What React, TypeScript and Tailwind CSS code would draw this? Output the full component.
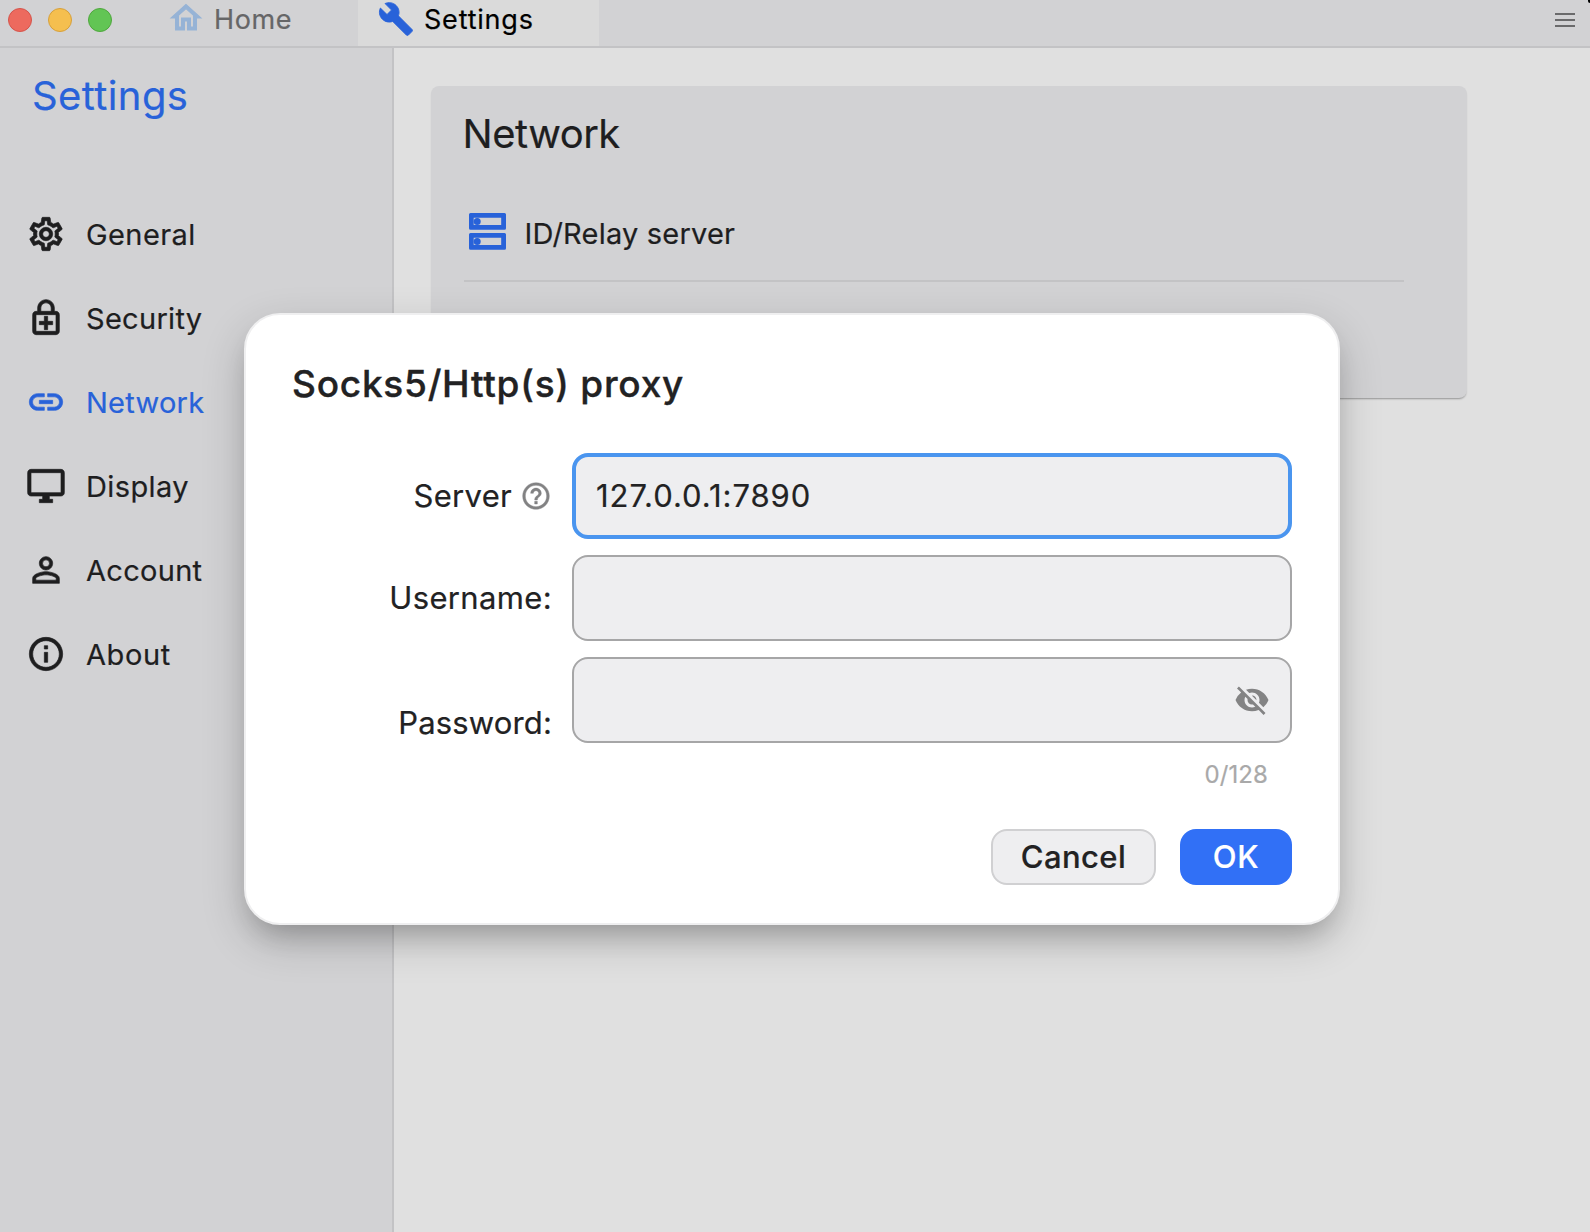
import type { ReactNode } from "react";
import {
  MdBuild,
  MdHelpOutline,
  MdInfoOutline,
  MdLink,
  MdOutlineDesktopWindows,
  MdOutlineEnhancedEncryption,
  MdOutlineHome,
  MdOutlineSettings,
  MdPersonOutline,
  MdVisibilityOff,
} from "react-icons/md";

const navItems = [
  { label: "General", Icon: MdOutlineSettings, tracking: "tracking-[0.4px]" },
  { label: "Security", Icon: MdOutlineEnhancedEncryption, tracking: "tracking-[0.3px]" },
  { label: "Network", Icon: MdLink, tracking: "tracking-[0.25px]", active: true },
  { label: "Display", Icon: MdOutlineDesktopWindows, tracking: "tracking-[0.4px]" },
  { label: "Account", Icon: MdPersonOutline, tracking: "tracking-[0.3px]" },
  { label: "About", Icon: MdInfoOutline, tracking: "tracking-[0.6px]" },
];

function ServerIcon() {
  return (
    <svg width="37" height="37" viewBox="0 0 37 37" className="shrink-0 text-[#2862d9]" fill="currentColor">
      <path
        fillRule="evenodd"
        d="M1.5 0h34A1.5 1.5 0 0 1 37 1.5v13.8a1.5 1.5 0 0 1-1.5 1.5h-34A1.5 1.5 0 0 1 0 15.3V1.5A1.5 1.5 0 0 1 1.5 0ZM4.7 4.7v7.4h27.5V4.7Z"
      />
      <circle cx="8.2" cy="8.4" r="3.5" />
      <path
        fillRule="evenodd"
        d="M1.5 20h34a1.5 1.5 0 0 1 1.5 1.5v13.8a1.5 1.5 0 0 1-1.5 1.5h-34A1.5 1.5 0 0 1 0 35.3V21.5A1.5 1.5 0 0 1 1.5 20ZM4.7 24.7v7.4h27.5v-7.4Z"
      />
      <circle cx="8.2" cy="28.4" r="3.5" />
    </svg>
  );
}

function TitleBar() {
  return (
    <header className="flex h-12 shrink-0 border-b-2 border-[#c3c3c5] bg-[#d2d2d4]">
      <div className="flex w-[358px] items-start pl-2 pt-2">
        <div className="flex gap-4">
          <span className="size-6 rounded-full border border-[#d5544b] bg-[#ed6a5e]" />
          <span className="size-6 rounded-full border border-[#d6a03c] bg-[#f5bf4f]" />
          <span className="size-6 rounded-full border border-[#4fa73d] bg-[#62c554]" />
        </div>
        <div className="-mt-2 ml-14 flex h-[38px] items-center">
          <MdOutlineHome className="mb-0.5 size-9 stroke-[0.7] text-[#96b3d6] [&_[fill=none]]:stroke-none" />
          <span className="ml-2.5 text-[27px] leading-none tracking-[0.6px] text-[#666667]">Home</span>
        </div>
      </div>
      <div className="flex h-[46px] w-[241px] bg-[#dadada] pl-[20px]">
        <div className="flex h-[38px] items-center">
          <MdBuild className="size-9 stroke-[0.6] text-[#2862d9] [&_[fill=none]]:stroke-none" />
          <span className="ml-2.5 text-[27px] leading-none tracking-[0.8px] text-black">Settings</span>
        </div>
      </div>
      <div className="ml-auto mr-[15px] mt-[13px] flex flex-col gap-1">
        <span className="h-0.5 w-5 bg-[#6a6a6b]" />
        <span className="h-0.5 w-5 bg-[#6a6a6b]" />
        <span className="h-0.5 w-5 bg-[#6a6a6b]" />
      </div>
    </header>
  );
}

function Sidebar() {
  return (
    <aside className="w-[394px] shrink-0 border-r-2 border-[#c3c3c5] bg-[#d2d2d4]">
      <h1 className="ml-8 mt-[24px] text-[40px] leading-[48px] tracking-[0.4px] text-[#2862d9]">Settings</h1>
      <nav className="mt-[72px]">
        {navItems.map(({ label, Icon, tracking, active }) => (
          <div
            key={label}
            className={`flex h-[84px] items-center pl-[26px] ${active ? "text-[#2862d9]" : "text-[#1e1e1f]"}`}
          >
            <Icon className="size-10 stroke-[0.4] [&_[fill=none]]:stroke-none" />
            <span className={`ml-5 text-[29px] leading-none ${tracking}`}>{label}</span>
          </div>
        ))}
      </nav>
    </aside>
  );
}

function Field({ label, children, labelClass = "" }: { label: ReactNode; children: ReactNode; labelClass?: string }) {
  return (
    <div className="flex">
      <div className={`flex h-[84px] w-[260px] items-center justify-end text-[31px] leading-none ${labelClass}`}>
        {label}
      </div>
      <div className="ml-5 w-[720px]">{children}</div>
    </div>
  );
}

function ProxyDialog() {
  return (
    <div
      role="dialog"
      className="absolute left-[244px] top-[313px] flex h-[612px] w-[1096px] flex-col rounded-[36px] border-2 border-[#efeff0] bg-white px-[46px] text-[#222223] shadow-[0_18px_28px_-12px_rgba(0,0,0,0.2),0_16px_44px_rgba(0,0,0,0.2)]"
    >
      <h2 className="mt-[45px] text-[37px] font-medium leading-[48px] tracking-[0.76px] [-webkit-text-stroke:0.35px]">
        Socks5/Http(s) proxy
      </h2>
      <div className="mt-[45px] flex flex-col gap-4">
        <Field
          label={
            <>
              <span className="tracking-[0.3px]">Server</span>
              <MdHelpOutline className="ml-2 mt-0.5 size-8 stroke-[0.3] text-[#828283] [&_[fill=none]]:stroke-none" />
            </>
          }
        >
          <div className="flex h-[86px] items-center rounded-2xl border-4 border-[#4a95ef] bg-[#eeeef0] pl-5 text-[31px] tracking-[0.96px]">
            127.0.0.1:7890
          </div>
        </Field>
        <Field label={<span className="tracking-[0.35px]">Username:</span>}>
          <div className="h-[86px] rounded-2xl border-2 border-[#a6a6a7] bg-[#eeeef0]" />
        </Field>
        <Field label={<span className="tracking-[0.15px]">Password:</span>} labelClass="mt-[23px]">
          <div className="flex h-[86px] items-center justify-end rounded-2xl border-2 border-[#a6a6a7] bg-[#eeeef0] pr-5">
            <MdVisibilityOff className="size-9 text-[#838384]" />
          </div>
          <div className="mb-px mr-6 mt-4 text-right text-[24px] leading-[32px] tracking-[0.1px] text-[#a9a9a9]">
            0/128
          </div>
        </Field>
      </div>
      <div className="mt-[37px] flex justify-end gap-6">
        <button className="h-14 w-[165px] rounded-2xl border-2 border-[#d0d0d2] bg-[#eeeef0] pb-0.5 text-[31px] font-medium leading-none tracking-[0.4px]">
          Cancel
        </button>
        <button className="h-14 w-28 rounded-2xl bg-[#3170f6] pb-0.5 text-[31px] font-medium leading-none tracking-[0.6px] text-white">
          OK
        </button>
      </div>
    </div>
  );
}

export default function App() {
  return (
    <div className="relative flex h-[1232px] w-[1590px] flex-col overflow-hidden bg-[#e0e0e0] font-['Inter',sans-serif] [-webkit-text-stroke:0.2px]">
      <TitleBar />
      <div className="flex grow">
        <Sidebar />
        <main className="grow pl-[37px] pt-[38px]">
          <section className="h-[312px] w-[1036px] rounded-lg bg-[#d2d2d4] pl-[33px] pt-[24px] text-[#1e1e1f] shadow-[0_2px_2px_-1px_rgba(0,0,0,0.35)]">
            <h2 className="-ml-[1.5px] text-[40px] leading-[48px] tracking-[-0.5px]">Network</h2>
            <div className="mt-[54px] flex h-[38px] items-center pl-[5px]">
              <ServerIcon />
              <span className="ml-[18.5px] mt-1 text-[29px] leading-none tracking-[0.2px]">ID/Relay server</span>
            </div>
            <hr className="mt-[30px] w-[940px] border-t-2 border-[#c3c3c5]" />
          </section>
        </main>
      </div>
      <ProxyDialog />
      <div className="absolute right-0 top-0 h-[3px] w-0.5 rounded-bl-full bg-black" />
    </div>
  );
}
